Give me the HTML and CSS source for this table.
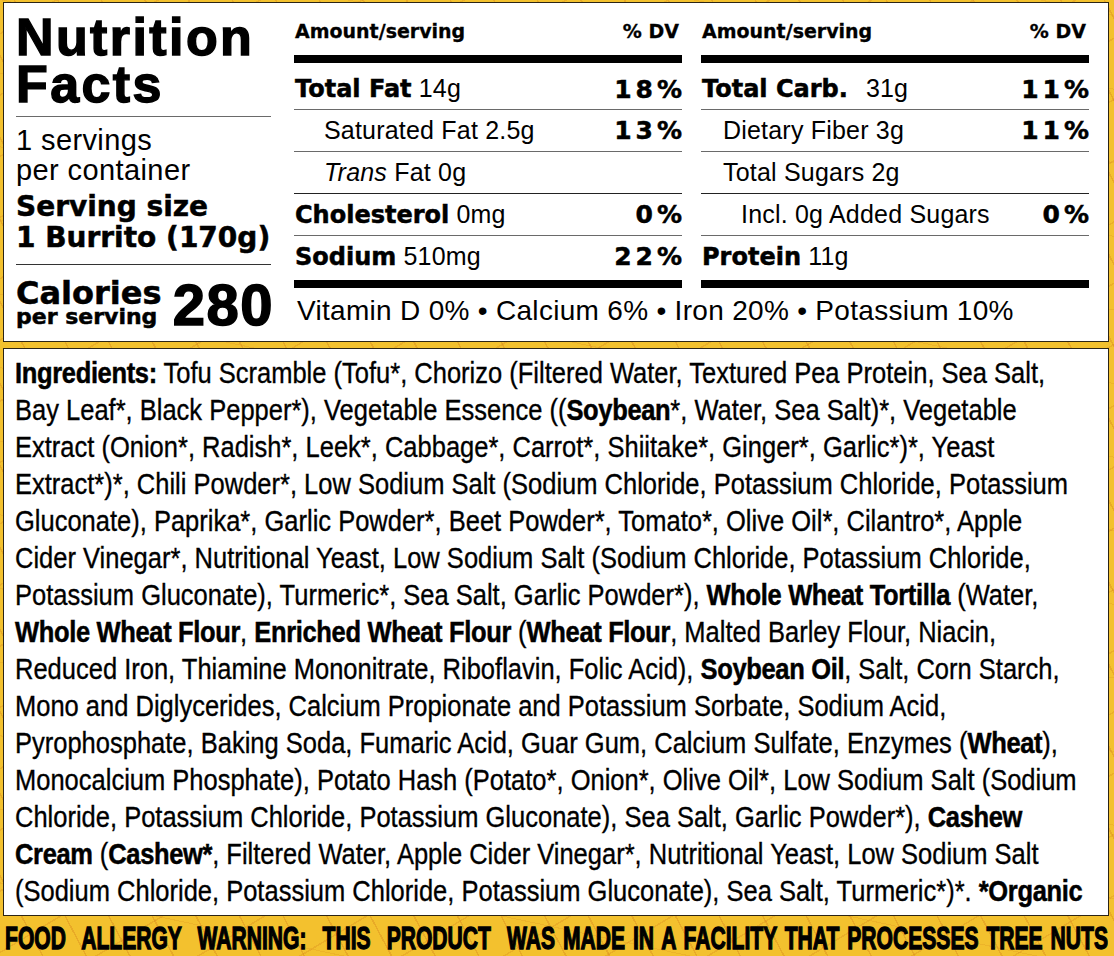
FILE: index.html
```html
<!DOCTYPE html>
<html lang="en">
<head>
<meta charset="utf-8">
<title>Nutrition Facts</title>
<link rel="stylesheet" href="styles.css">
</head>
<body>
<div class="label">
  <section class="facts">
    <div class="lead">
      <h1 class="title">Nutrition<br>Facts</h1>
      <div class="rule"></div>
      <p class="servings">1 servings<br>per container</p>
      <p class="size">Serving size<br>1 Burrito (170g)</p>
      <div class="rule dark"></div>
      <div class="calories">
        <div class="cal-label"><span class="cal-big">Calories</span><span class="cal-small">per serving</span></div>
        <div class="cal-num">280</div>
      </div>
    </div>

    <div class="table">
      <div class="head"><span>Amount/serving</span><span>% DV</span></div>
      <div class="bar"></div>
      <div class="row first"><span><b>Total Fat</b> 14g</span><b class="dv">18%</b></div>
      <div class="row sub"><span>Saturated Fat 2.5g</span><b class="dv">13%</b></div>
      <div class="row sub dk"><span><i>Trans</i> Fat 0g</span></div>
      <div class="row"><span><b>Cholesterol</b> 0mg</span><b class="dv">0%</b></div>
      <div class="row last"><span><b>Sodium</b> 510mg</span><b class="dv">22%</b></div>
      <div class="bar"></div>
    </div>

    <div class="table">
      <div class="head"><span>Amount/serving</span><span>% DV</span></div>
      <div class="bar"></div>
      <div class="row first"><span><b>Total Carb.</b><span class="gap">31g</span></span><b class="dv">11%</b></div>
      <div class="row sub2"><span>Dietary Fiber 3g</span><b class="dv">11%</b></div>
      <div class="row sub2 dk"><span>Total Sugars 2g</span></div>
      <div class="row sub3"><span>Incl. 0g Added Sugars</span><b class="dv">0%</b></div>
      <div class="row last"><span><b>Protein</b> 11g</span></div>
      <div class="bar"></div>
    </div>

    <p class="vitamins">Vitamin D 0% • Calcium 6% • Iron 20% • Potassium 10%</p>
  </section>

  <section class="ingredients">
    <div class="ing-text">
      <span class="ln"><b>Ingredients:</b> Tofu Scramble (Tofu*, Chorizo (Filtered Water, Textured Pea Protein, Sea Salt,</span>
      <span class="ln">Bay Leaf*, Black Pepper*), Vegetable Essence ((<b>Soybean</b>*, Water, Sea Salt)*, Vegetable</span>
      <span class="ln">Extract (Onion*, Radish*, Leek*, Cabbage*, Carrot*, Shiitake*, Ginger*, Garlic*)*, Yeast</span>
      <span class="ln">Extract*)*, Chili Powder*, Low Sodium Salt (Sodium Chloride, Potassium Chloride, Potassium</span>
      <span class="ln">Gluconate), Paprika*, Garlic Powder*, Beet Powder*, Tomato*, Olive Oil*, Cilantro*, Apple</span>
      <span class="ln">Cider Vinegar*, Nutritional Yeast, Low Sodium Salt (Sodium Chloride, Potassium Chloride,</span>
      <span class="ln">Potassium Gluconate), Turmeric*, Sea Salt, Garlic Powder*), <b>Whole Wheat Tortilla</b> (Water,</span>
      <span class="ln"><b>Whole Wheat Flour</b>, <b>Enriched Wheat Flour</b> (<b>Wheat Flour</b>, Malted Barley Flour, Niacin,</span>
      <span class="ln">Reduced Iron, Thiamine Mononitrate, Riboflavin, Folic Acid), <b>Soybean Oil</b>, Salt, Corn Starch,</span>
      <span class="ln">Mono and Diglycerides, Calcium Propionate and Potassium Sorbate, Sodium Acid,</span>
      <span class="ln">Pyrophosphate, Baking Soda, Fumaric Acid, Guar Gum, Calcium Sulfate, Enzymes (<b>Wheat</b>),</span>
      <span class="ln">Monocalcium Phosphate), Potato Hash (Potato*, Onion*, Olive Oil*, Low Sodium Salt (Sodium</span>
      <span class="ln">Chloride, Potassium Chloride, Potassium Gluconate), Sea Salt, Garlic Powder*), <b>Cashew</b></span>
      <span class="ln"><b>Cream</b> (<b>Cashew*</b>, Filtered Water, Apple Cider Vinegar*, Nutritional Yeast, Low Sodium Salt</span>
      <span class="ln">(Sodium Chloride, Potassium Chloride, Potassium Gluconate), Sea Salt, Turmeric*)*. <b>*Organic</b></span>
    </div>
  </section>

  <div class="warning">
    <p class="warn-text"><span class="w1">FOOD ALLERGY WARNING: THIS PRODUCT WAS</span> MADE IN A FACILITY THAT PROCESSES TREE NUTS</p>
  </div>
</div>
</body>
</html>
```

FILE: styles.css
```css
* { box-sizing: border-box; }
html, body { margin: 0; padding: 0; }
body {
  width: 1114px;
  height: 956px;
  overflow: hidden;
  color: #000;
  font-family: "Liberation Sans", Arial, sans-serif;
  background-color: #f3c12e;
  background-image:
    repeating-linear-gradient(62deg, rgba(0,0,0,0) 0 37px, rgba(214,132,28,.38) 37px 38.5px),
    repeating-linear-gradient(-31deg, rgba(0,0,0,0) 0 51px, rgba(214,132,28,.30) 51px 52.5px),
    repeating-linear-gradient(12deg, rgba(0,0,0,0) 0 71px, rgba(214,132,28,.22) 71px 72px);
}
.label {
  padding: 2px 5px 0 3px;
  display: flex;
  flex-direction: column;
}
p, h1 { margin: 0; }

/* ---------- top panel ---------- */
.facts {
  background: #fff;
  border: 1px solid #2b2415;
  height: 340px;
  padding: 0 0 0 12px;
  display: grid;
  grid-template-columns: 259px 388px 388px;
  grid-template-rows: auto 1fr;
  column-gap: 19px;
}
.lead {
  grid-row: 1 / 3;
  margin-right: 4px;
  padding-top: 11px;
  display: flex;
  flex-direction: column;
}
.title {
  font-family: "Liberation Sans", Arial, sans-serif;
  font-weight: 700;
  font-size: 52px;
  line-height: 47px;
  letter-spacing: 2.4px;
  -webkit-text-stroke: 1.4px #000;
}
.rule { height: 1px; background: #6a6a6a; margin-top: 8px; }
.rule.dark { background: #333; margin-top: 11px; }
.servings {
  margin-top: 8px;
  font-size: 29px;
  line-height: 30px;
  letter-spacing: 0.4px;
}
.size {
  margin-top: 6px;
  font-family: "DejaVu Sans", sans-serif;
  font-weight: 700;
  font-size: 28px;
  line-height: 31px;
  white-space: nowrap;
  -webkit-text-stroke: 0.5px #000;
}
.calories {
  display: flex;
  align-items: flex-end;
  justify-content: space-between;
  margin-top: 14px;
}
.cal-label {
  display: flex;
  flex-direction: column;
  font-family: "DejaVu Sans", sans-serif;
  font-weight: 700;
  -webkit-text-stroke: 0.5px #000;
}
.cal-big { font-size: 32px; line-height: 28px; }
.cal-small { font-size: 22px; line-height: 20px; }
.cal-num {
  font-family: "Liberation Sans", Arial, sans-serif;
  font-weight: 700;
  font-size: 58px;
  line-height: 44px;
  letter-spacing: 1.5px;
  -webkit-text-stroke: 1.5px #000;
  margin-right: -3px;
}

/* ---------- tables ---------- */
.table { padding-top: 19px; display: flex; flex-direction: column; }
.table b {
  font-family: "DejaVu Sans", sans-serif;
  font-weight: 700;
  -webkit-text-stroke: 0.5px #000;
}
.head {
  display: flex;
  justify-content: space-between;
  font-family: "DejaVu Sans", sans-serif;
  font-weight: 700;
  font-size: 19px;
  line-height: 19px;
  padding: 0 3px 0 1px;
  -webkit-text-stroke: 0.3px #000;
}
.bar { height: 8px; background: #000; margin-top: 14px; }
.row + .bar { margin-top: 0; }
.row {
  height: 42px;
  display: flex;
  align-items: center;
  justify-content: space-between;
  font-size: 25px;
  line-height: 25px;
  letter-spacing: 0.2px;
  border-bottom: 1px solid #6a6a6a;
  padding-left: 1px;
}
.row b { font-size: 24px; letter-spacing: 0; }
.row.first { height: 47px; padding-top: 6px; }
.row.last { height: 44px; border-bottom: 0; padding-bottom: 3px; }
.row.dk { border-bottom-color: #222; }
.row.sub { padding-left: 30px; }
.row.sub2 { padding-left: 22px; }
.row.sub3 { padding-left: 40px; }
.row .dv { font-size: 25px; letter-spacing: 4px; margin-right: -4px; }
.gap { margin-left: 18px; }

.vitamins {
  grid-column: 2 / 4;
  font-size: 28px;
  line-height: 30px;
  letter-spacing: 0.3px;
  margin-top: 8px;
  padding-left: 3px;
}

/* ---------- ingredients ---------- */
.ingredients {
  margin-top: 6px;
  background: #fff;
  border: 1px solid #2b2415;
  height: 568px;
  padding: 5px 0 0 11px;
  overflow: hidden;
}
.ing-text {
  width: 1310px;
  transform: scaleX(0.85);
  transform-origin: 0 0;
  font-family: "Liberation Sans", Arial, sans-serif;
  font-size: 30px;
  line-height: 37px;
  -webkit-text-stroke: 0.35px #000;
}
.ln { display: block; white-space: nowrap; }
.ing-text b { font-weight: 700; letter-spacing: -0.4px; -webkit-text-stroke: 0.5px #000; }

/* ---------- warning ---------- */
.warning {
  margin-top: 4px;
  padding: 0 0 0 2px;
  height: 38px;
}
.warn-text {
  width: 1622px;
  transform: scaleX(0.68);
  transform-origin: 0 0;
  font-family: "Liberation Sans", Arial, sans-serif;
  font-weight: 700;
  font-size: 31px;
  line-height: 38px;
  text-align: justify;
  text-align-last: justify;
  white-space: nowrap;
  -webkit-text-stroke: 1.3px #000;
}
.w1 { word-spacing: 12px; }
```
